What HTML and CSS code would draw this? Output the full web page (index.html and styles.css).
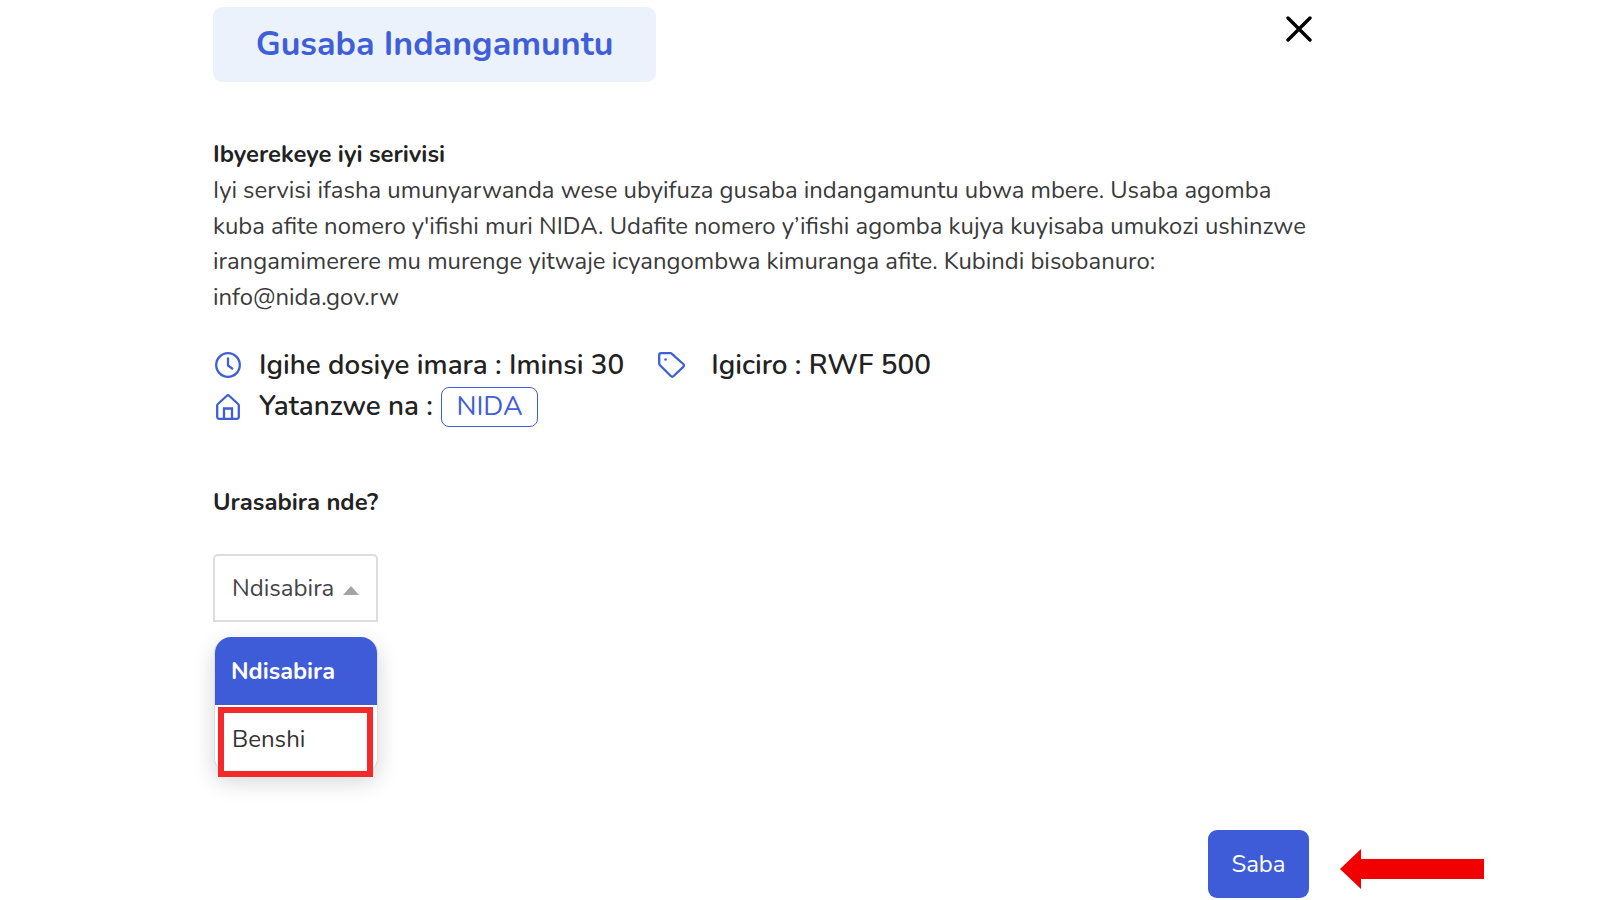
FILE: index.html
```html
<!DOCTYPE html>
<html lang="rw">
<head>
<meta charset="utf-8">
<title>Gusaba Indangamuntu</title>
<link rel="stylesheet" href="styles.css">
</head>
<body>
<main class="dialog">
  <header class="top">
    <h1 class="title">Gusaba Indangamuntu</h1>
    <svg class="close" viewBox="0 0 26 26" width="26" height="26"><path d="M2 2 24 24M24 2 2 24" fill="none" stroke="#000" stroke-width="3.4" stroke-linecap="round"/></svg>
  </header>
  <section class="about">
    <h2 class="about-head">Ibyerekeye iyi serivisi</h2>
    <p class="about-text">Iyi servisi ifasha umunyarwanda wese ubyifuza gusaba indangamuntu ubwa mbere. Usaba agomba<br>kuba afite nomero y'ifishi muri NIDA. Udafite nomero y’ifishi agomba kujya kuyisaba umukozi ushinzwe<br>irangamimerere mu murenge yitwaje icyangombwa kimuranga afite. Kubindi bisobanuro:<br>info@nida.gov.rw</p>
  </section>
  <section class="meta">
    <div class="meta-row">
      <svg class="ico" viewBox="0 0 26 26" width="26" height="26"><circle cx="13" cy="13" r="11.8" fill="none" stroke="#3f5fd9" stroke-width="2.3"/><path d="M13 6.5v7l4.2 3" fill="none" stroke="#3f5fd9" stroke-width="2.3" stroke-linecap="round" stroke-linejoin="round"/></svg>
      <span class="meta-a">Igihe dosiye imara : Iminsi 30</span>
      <svg class="ico tag" viewBox="0 0 27 26" width="27" height="26"><path d="M1.2 3A1.8 1.8 0 0 1 3 1.2H12.5a2 2 0 0 1 1.4.6L25.3 12a2 2 0 0 1 0 2.8L15.6 24a2 2 0 0 1-2.8 0L1.8 13a2 2 0 0 1-.6-1.4Z" fill="none" stroke="#3f5fd9" stroke-width="2.3" stroke-linejoin="round"/><circle cx="7.5" cy="7.5" r="1.3" fill="#3f5fd9"/></svg>
      <span class="meta-b">Igiciro : RWF 500</span>
    </div>
    <div class="meta-row second">
      <svg class="ico home" viewBox="0 0 24 26" width="24" height="26"><path d="M1.2 11.5a2 2 0 0 1 .7-1.5L10.6 2a2 2 0 0 1 2.8 0l8.7 8a2 2 0 0 1 .7 1.5V22.8a2 2 0 0 1-2 2H3.2a2 2 0 0 1-2-2Z" fill="none" stroke="#3f5fd9" stroke-width="2.3" stroke-linejoin="round"/><path d="M8 24.8V14.5h8v10.3" fill="none" stroke="#3f5fd9" stroke-width="2.3"/></svg>
      <span class="meta-a">Yatanzwe na :</span>
      <span class="badge">NIDA</span>
    </div>
  </section>
  <h2 class="question">Urasabira nde?</h2>
  <div class="select">
    <span>Ndisabira</span>
    <span class="caret"></span>
  </div>
  <ul class="menu">
    <li class="opt active">Ndisabira</li>
    <li class="opt marked">Benshi</li>
  </ul>
  <footer class="actions">
    <button class="send" type="button">Saba</button>
  </footer>
  <svg class="arrow" viewBox="0 0 144 40" width="144" height="40"><path d="M0 20 21 0V10H144V30H21V40Z" fill="#f00000"/></svg>
</main>
</body>
</html>
```
FILE: styles.css
```css
*, *::after { box-sizing: border-box; }
html, body { margin: 0; height: 100%; overflow: hidden; background: #fff; }
body { font-family: "Nunito", "Open Sans", "Noto Sans", sans-serif; color: #333; }
.dialog { position: relative; width: 1600px; height: 900px; padding: 7px 0 0 213px; }
.top { display: flex; justify-content: space-between; align-items: flex-start; width: 1098.5px; height: 75px; }
.title { margin: 0; width: 443px; height: 75px; padding-bottom: 2px; display: flex; align-items: center; justify-content: center; background: #ebf2fb; border-radius: 9px; color: #3f5fd9; font-size: 34px; font-weight: 700; }
.close { margin: 9px 0 0 0; }
.about { margin-top: 54px; width: 1120px; }
.about-head { margin: 0; font-size: 23.8px; line-height: 37px; font-weight: 700; color: #222; }
.about-text { margin: 0; font-size: 23.87px; line-height: 35.6px; color: #3a3a3a; }
.meta { margin-top: 30px; }
.meta-row { display: flex; align-items: center; height: 40px; font-size: 27.8px; font-weight: 600; color: #222; }
.meta-row.second { height: 42px; margin-top: 1px; }
.second .meta-a { margin-bottom: 2px; }
.ico { flex: none; margin-left: 2px; margin-right: 18px; }
.home { margin-left: 3px; margin-right: 19px; }
.tag { margin-left: 34px; margin-right: 26px; }
.meta-a { white-space: nowrap; }
.badge { margin-left: 8.5px; height: 40px; padding: 0 14px 2px; display: flex; align-items: center; border: 1.5px solid #3f5fd9; border-radius: 8px; color: #3f5fd9; font-size: 27px; font-weight: 400; }
.question { margin: 56px 0 0; font-size: 23.8px; line-height: 36px; font-weight: 700; color: #222; }
.select { margin-top: 34px; width: 165px; height: 68px; padding: 0 17px; display: flex; align-items: center; gap: 9px; border: 2px solid #ddd; border-radius: 5px 5px 0 0; font-size: 24px; color: #444; }
.caret { width: 0; height: 0; border-left: 8px solid transparent; border-right: 8px solid transparent; border-bottom: 9px solid #a4a4a4; margin-top: 4px; }
.menu { list-style: none; margin: 15px 0 0 1px; padding: 0; width: 164px; border: 1px solid #ddd; border-top: 0; border-radius: 16px; background: #fff; box-shadow: 0 8px 22px rgba(0,0,0,.16); }
.opt { height: 68px; padding: 0 17px; display: flex; align-items: center; font-size: 24px; }
.active { padding-left: 16px; background: #3f5cd8; color: #fff; font-size: 23.5px; font-weight: 700; border-radius: 16px 16px 0 0; }
.marked { position: relative; color: #333; }
.marked::after { content: ""; position: absolute; left: 3px; top: 2px; width: 155px; height: 70px; border: 6px solid #f42a2a; }
.actions { position: absolute; left: 1208px; top: 830px; }
.send { width: 101px; height: 68px; border: 0; border-radius: 9px; background: #3f5cd8; color: #fff; font: 400 24px "Nunito", "Open Sans", "Noto Sans", sans-serif; }
.arrow { position: absolute; left: 1340px; top: 849px; }
```
